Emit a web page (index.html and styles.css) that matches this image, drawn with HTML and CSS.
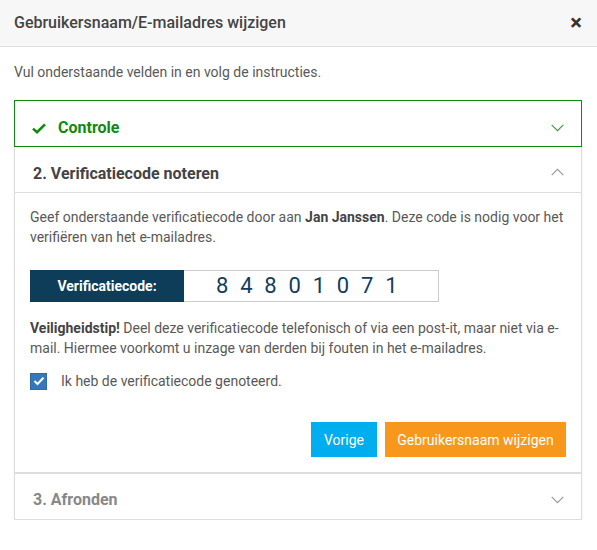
FILE: index.html
```html
<!DOCTYPE html>
<html lang="nl">
<head>
<meta charset="utf-8">
<title>Gebruikersnaam/E-mailadres wijzigen</title>
<link rel="stylesheet" href="styles.css">
</head>
<body>
<div class="modal">
  <div class="modal-header">
    <h1 class="modal-title">Gebruikersnaam/E-mailadres wijzigen</h1>
    <span class="close">&times;</span>
  </div>
  <div class="modal-body">
    <p class="intro">Vul onderstaande velden in en volg de instructies.</p>
    <div class="steps">
      <div class="panel panel-done">
        <div class="panel-heading">
          <div class="heading-left">
            <svg class="check" width="14" height="11" viewBox="0 0 14 11"><path d="M1 5.6 L5 9.2 L13 1.4" fill="none" stroke="#0f8a0f" stroke-width="2.6"/></svg>
            <span class="panel-title done">Controle</span>
          </div>
          <svg class="chev" width="13" height="8" viewBox="0 0 13 8"><path d="M0.7 0.8 L6.5 6.6 L12.3 0.8" fill="none" stroke="#3aa03a" stroke-width="1.2"/></svg>
        </div>
      </div>
      <div class="panel panel-open">
        <div class="panel-heading bordered">
          <span class="panel-title">2. Verificatiecode noteren</span>
          <svg class="chev up" width="13" height="8" viewBox="0 0 13 8"><path d="M0.7 7.2 L6.5 1.4 L12.3 7.2" fill="none" stroke="#999" stroke-width="1.2"/></svg>
        </div>
        <div class="panel-body">
          <p class="text">Geef onderstaande verificatiecode door aan <strong>Jan Janssen</strong>. Deze code is nodig voor het verifiëren van het e-mailadres.</p>
          <div class="code-row">
            <div class="code-label">Verificatiecode:</div>
            <div class="code-value">84801071</div>
          </div>
          <p class="text tip"><strong>Veiligheidstip!</strong> Deel deze verificatiecode telefonisch of via een post-it, maar niet via e-mail. Hiermee voorkomt u inzage van derden bij fouten in het e-mailadres.</p>
          <label class="confirm">
            <span class="checkbox"><svg width="12" height="10" viewBox="0 0 12 10"><path d="M1.5 5 L4.5 8 L10.5 1.8" fill="none" stroke="#fff" stroke-width="2"/></svg></span>
            <span>Ik heb de verificatiecode genoteerd.</span>
          </label>
          <div class="actions">
            <button class="btn btn-prev">Vorige</button>
            <button class="btn btn-next">Gebruikersnaam wijzigen</button>
          </div>
        </div>
      </div>
      <div class="panel panel-closed">
        <div class="panel-heading">
          <span class="panel-title muted">3. Afronden</span>
          <svg class="chev" width="13" height="8" viewBox="0 0 13 8"><path d="M0.7 0.8 L6.5 6.6 L12.3 0.8" fill="none" stroke="#999" stroke-width="1.2"/></svg>
        </div>
      </div>
    </div>
  </div>
</div>
</body>
</html>
```

FILE: styles.css
```css
* { box-sizing: border-box; }
html, body { margin: 0; padding: 0; background: #fff; }
body {
  font-family: Roboto, "Liberation Sans", Arial, sans-serif;
  color: #595959;
  font-size: 14px;
  line-height: 20px;
}
.modal-header {
  height: 47px;
  background: #f7f7f7;
  border-bottom: 1px solid #dedede;
  display: flex;
  align-items: center;
  justify-content: space-between;
  padding: 0 14px 0 14px;
}
.modal-title {
  margin: 0;
  font-size: 16px;
  font-weight: 500;
  color: #444;
  line-height: 20px;
}
.close {
  font-size: 22px;
  font-weight: 700;
  color: #333;
  line-height: 20px;
  margin-right: 1px;
}
.modal-body {
  padding: 15px 15px 0 14px;
}
.intro {
  margin: 0 0 18px 0;
}
.steps {
  display: flex;
  flex-direction: column;
}
.panel {
  border: 1px solid #ddd;
  box-shadow: 0 1px 2px rgba(0,0,0,0.08);
  background: #fff;
}
.panel-done {
  border-color: #0f8a0f;
}
.panel-open {
  border-top: 0;
  border-bottom-width: 2px;
}
.panel-closed {
  border-top-width: 0;
}
.panel-heading {
  height: 45px;
  display: flex;
  align-items: center;
  justify-content: space-between;
  padding: 16px 17px 9px 18px;
  line-height: 20px;
}
.panel-done .panel-heading { padding-left: 17px; padding-top: 17px; padding-bottom: 8px; }
.panel-heading.bordered {
  height: 46px;
  padding-top: 17px;
  border-bottom: 1px solid #ddd;
}
.panel-closed .panel-heading { height: 45px; padding-top: 16px; }
.heading-left {
  display: flex;
  align-items: center;
  gap: 12px;
}
.check { display: block; margin-top: 1px; }
.panel-title {
  font-size: 16px;
  font-weight: 700;
  color: #444;
}
.panel-title.done { color: #0f8a0f; }
.panel-title.muted { color: #888; }
.chev { display: block; }
.chev.up { margin-top: -4px; }
.panel-body {
  padding: 14px 15px 15px 15px;
}
.text {
  margin: 0;
}
.text strong { color: #444; font-weight: 700; }
.code-row {
  display: flex;
  margin-top: 23px;
  height: 32px;
}
.code-label {
  width: 154px;
  background: #0e3d59;
  color: #fff;
  font-weight: 700;
  display: flex;
  align-items: center;
  justify-content: center;
}
.code-value {
  width: 255px;
  border: 1px solid #ccc;
  border-left: 0;
  color: #123e5c;
  font-size: 22px;
  letter-spacing: 11.8px;
  display: flex;
  align-items: center;
  padding-left: 32px;
}
.tip { margin-top: 16px; }
.confirm {
  display: flex;
  align-items: center;
  gap: 14px;
  margin-top: 14px;
  height: 18px;
}
.checkbox {
  width: 17px;
  height: 17px;
  background: #3579bd;
  border: 1px solid #2f6aa6;
  display: flex;
  align-items: center;
  justify-content: center;
}
.checkbox svg { display: block; }
.actions {
  display: flex;
  justify-content: flex-end;
  gap: 8px;
  margin-top: 32px;
}
.btn {
  height: 35px;
  border: 0;
  color: #fff;
  font-family: Roboto, "Liberation Sans", Arial, sans-serif;
  font-size: 14px;
  font-weight: 400;
  padding: 0;
  white-space: nowrap;
  text-align: center;
  cursor: pointer;
}
.btn-prev { background: #00aeef; width: 66px; }
.btn-next { background: #f7981d; width: 181px; }
```
